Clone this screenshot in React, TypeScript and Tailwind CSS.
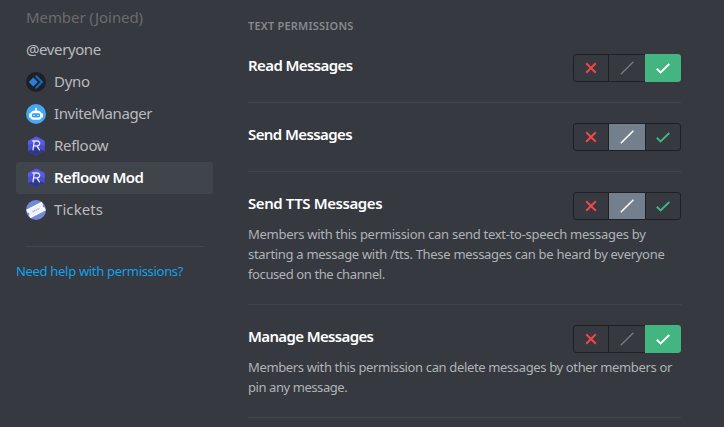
import React from "react";

type Access = "deny" | "neutral" | "allow";

function DynoIcon() {
  return (
    <svg viewBox="0 0 20 20" className="size-5 shrink-0">
      <circle cx="10" cy="10" r="10" fill="#1f2023" />
      <path d="M7.3 5.4 L11.8 9.9 L7.3 14.4 L2.8 9.9 Z" fill="#2b7ddb" />
      <path d="M9 3.4 H11 L17.4 9.9 L11 16.600 H9 L9.400 14.900 L14.2 9.9 L9.400 5.1 Z" fill="#1766bd" />
    </svg>
  );
}

function InviteManagerIcon() {
  return (
    <svg viewBox="0 0 20 20" className="size-5 shrink-0">
      <circle cx="10" cy="10" r="10" fill="#46a8f2" />
      <circle cx="10" cy="4.7" r="1" fill="#fff" />
      <path d="M9.5 5h1v2h-1z" fill="#fff" />
      <rect x="3" y="9.300" width="14" height="4.400" rx="1.200" fill="#e8f5ff" />
      <path d="M4.300 10.800c0-3 2.200-4.400 5.700-4.400s5.700 1.400 5.700 4.400v1.600c0 2-1.200 3.300-3.100 3.300H7.400c-1.900 0-3.100-1.300-3.100-3.300z" fill="#fff" />
      <rect x="5.800" y="9.300" width="8.400" height="4.100" rx="1.600" fill="#3a9df0" />
      <path d="M7.200 11.400h1.700M11.100 11.400h1.700" stroke="#d8efff" strokeWidth="1" />
    </svg>
  );
}

function RefloowIcon() {
  return (
    <svg viewBox="0 0 20 20" className="size-5 shrink-0">
      <path d="M10.300 0.500 L18.700 5.100 V14.900 L10.300 19.500 L2 14.900 V5.100 Z" fill="#4a4fd0" />
      <path d="M10.300 0.500 L18.700 5.100 V10 L10.300 6 L2 9 V5.100 Z" fill="#585cdf" />
      <path d="M2 14.900 L10 11.500 L18.700 14.900 L10.300 19.500 Z" fill="#32358f" />
      <path d="M7 14.400 L8.200 5 M6.300 5 H11 C14.700 5 14.500 9.900 10.800 9.900 H8 M10.800 9.900 L13.700 14.400" fill="none" stroke="#e4e4fb" strokeWidth="1.300" />
    </svg>
  );
}

function TicketsIcon() {
  return (
    <svg viewBox="0 0 20 20" className="size-5 shrink-0">
      <circle cx="10" cy="10" r="10" fill="#7289da" />
      <g transform="rotate(-27 10 10)">
        <path d="M1.300 5.300H18.700V8.800A1.200 1.200 0 0 0 18.700 11.200V14.700H1.300V11.200A1.200 1.200 0 0 0 1.300 8.800Z" fill="#fafbff" />
        <rect x="4.500" y="7.200" width="11" height="5.600" fill="#f4f6ff" stroke="#dde3fa" strokeWidth=".5" />
        <path d="M6 10h8" stroke="#a9b7ea" strokeWidth="1.600" strokeDasharray="1.400 .5" />
      </g>
    </svg>
  );
}

interface Role {
  name: string;
  tracking: string;
  icon?: React.ReactNode;
  state?: "disabled" | "selected";
}

const roles: Role[] = [
  { name: "Member (Joined)", tracking: "tracking-[-0.08px]", state: "disabled" },
  { name: "@everyone", tracking: "tracking-[-0.4px]" },
  { name: "Dyno", tracking: "tracking-[-0.3px]", icon: <DynoIcon /> },
  { name: "InviteManager", tracking: "tracking-[-0.4px]", icon: <InviteManagerIcon /> },
  { name: "Refloow", tracking: "tracking-[-0.3px]", icon: <RefloowIcon /> },
  { name: "Refloow Mod", tracking: "tracking-[-0.55px]", icon: <RefloowIcon />, state: "selected" },
  { name: "Tickets", tracking: "tracking-[0.08px]", icon: <TicketsIcon /> },
];

function RoleItem({ role }: { role: Role }) {
  const color =
    role.state === "selected"
      ? "bg-[#40444b] text-white font-semibold"
      : role.state === "disabled"
        ? "text-[#6b6c6e]"
        : "text-[#b9bbbe]";
  return (
    <li className={`flex h-8 items-center gap-2 rounded-[3px] px-2.5 text-[15px] whitespace-nowrap ${color}`}>
      {role.icon}
      <span className={`pb-0.5 ${role.tracking}`}>{role.name}</span>
    </li>
  );
}

function Toggle({ value }: { value: Access }) {
  const allowed = value === "allow";
  const neutral = value === "neutral";
  return (
    <div className="flex h-7 w-[108px] shrink-0 rounded-[3px] border border-[#1e2023]">
      <button className="flex w-[34px] items-center justify-center text-[#f04747]">
        <svg viewBox="0 0 16 16" className="size-4" fill="none" stroke="currentColor" strokeWidth="2">
          <path d="M3.200 3.200 12.800 12.800M12.800 3.200 3.200 12.800" />
        </svg>
      </button>
      <button className={`flex w-[37px] items-center justify-center border-l border-[#1e2023] ${neutral ? "bg-[#747f8d] text-white" : "text-[#747f8d]"}`}>
        <svg viewBox="0 0 16 16" className="size-4" fill="none" stroke="currentColor" strokeWidth={neutral ? 1.6 : 1.2}>
          <path d="M1.800 14.200 14.400 1.800" />
        </svg>
      </button>
      <button className={allowed ? "-my-px -mr-px flex w-9 items-center justify-center rounded-r-[3px] bg-[#43b581] text-white" : "flex w-[35px] items-center justify-center border-l border-[#1e2023] text-[#43b581]"}>
        <svg viewBox="0 0 16 16" className="size-4" fill="none" stroke="currentColor" strokeWidth="1.900">
          <path d="M1.800 8.800 5.600 12.400 14.300 4" />
        </svg>
      </button>
    </div>
  );
}

interface Line {
  text: string;
  tracking: string;
}

interface Permission {
  title: string;
  tracking: string;
  value: Access;
  lines?: Line[];
}

const permissions: Permission[] = [
  { title: "Read Messages", tracking: "tracking-[-0.6px]", value: "allow" },
  { title: "Send Messages", tracking: "tracking-[-0.6px]", value: "neutral" },
  {
    title: "Send TTS Messages",
    tracking: "tracking-[-0.42px]",
    value: "neutral",
    lines: [
      { text: "Members with this permission can send text-to-speech messages by", tracking: "tracking-[-0.28px]" },
      { text: "starting a message with /tts. These messages can be heard by everyone", tracking: "tracking-[-0.3px]" },
      { text: "focused on the channel.", tracking: "tracking-[-0.4px]" },
    ],
  },
  {
    title: "Manage Messages",
    tracking: "tracking-[-0.64px]",
    value: "allow",
    lines: [
      { text: "Members with this permission can delete messages by other members or", tracking: "tracking-[-0.36px]" },
      { text: "pin any message.", tracking: "tracking-[-0.43px]" },
    ],
  },
];

function PermissionRow({ item }: { item: Permission }) {
  return (
    <section className="mb-5 border-b border-[#43454a] pb-5">
      <div className="flex h-7 justify-between">
        <h3 className={`text-[15px] leading-[22px] font-semibold whitespace-nowrap text-white ${item.tracking}`}>{item.title}</h3>
        <Toggle value={item.value} />
      </div>
      {item.lines && (
        <p className="mt-1 text-[13px] leading-5 whitespace-nowrap text-[#b0b3b7]">
          {item.lines.map((line) => (
            <span key={line.text} className={`block ${line.tracking}`}>
              {line.text}
            </span>
          ))}
        </p>
      )}
    </section>
  );
}

export default function App() {
  return (
    <div className="flex h-[427px] w-[724px] overflow-hidden bg-[#36393f] font-['Noto_Sans',sans-serif]">
      <aside className="w-[213px] shrink-0 pt-0.5 pl-4">
        <ul>
          {roles.map((role) => (
            <RoleItem key={role.name} role={role} />
          ))}
        </ul>
        <hr className="mt-5 mr-[9px] ml-2.5 border-[#43454a]" />
        <a className="mt-3.5 block text-[13px] leading-5 tracking-[-0.31px] whitespace-nowrap text-[#12a2ec]">
          Need help with permissions?
        </a>
      </aside>
      <main className="ml-[35px] w-[433px] pt-[18px]">
        <h2 className="mb-5 text-[11px] leading-4 font-semibold tracking-[0.2px] whitespace-nowrap text-[#86898e]">TEXT PERMISSIONS</h2>
        {permissions.map((item) => (
          <PermissionRow key={item.title} item={item} />
        ))}
      </main>
    </div>
  );
}
